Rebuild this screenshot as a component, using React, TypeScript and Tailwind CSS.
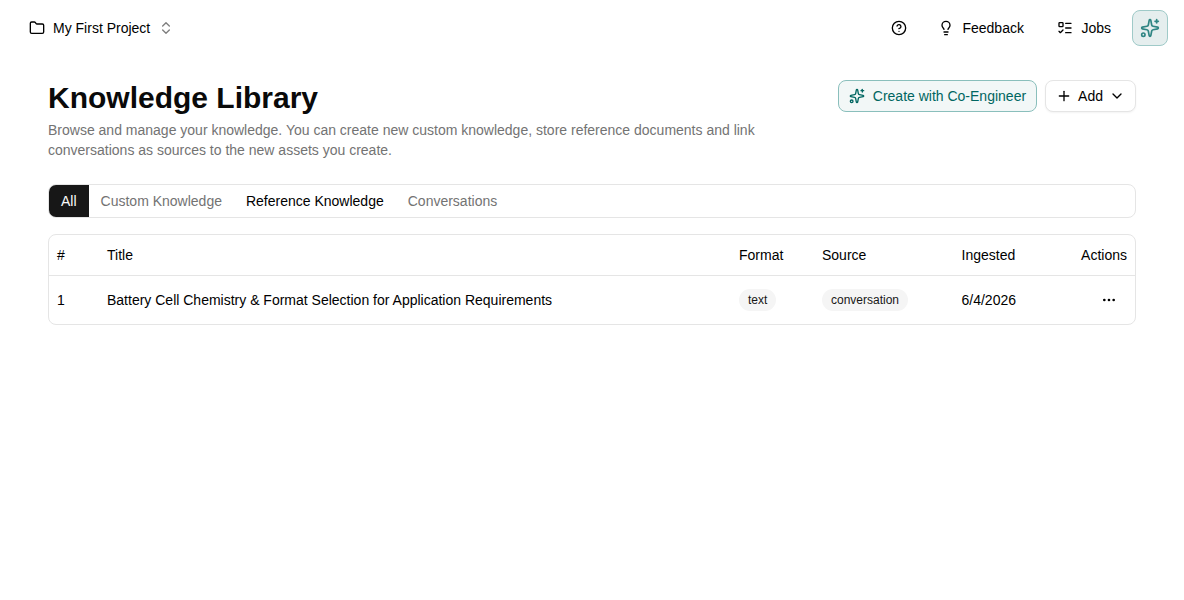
import {
  ChevronDown,
  ChevronsUpDown,
  CircleQuestionMark,
  Ellipsis,
  Folder,
  Lightbulb,
  ListTodo,
  Plus,
  Sparkles,
} from 'lucide-react';
import { clsx } from 'clsx';
import { useState } from 'react';

interface KnowledgeItem {
  id: number;
  title: string;
  format: string;
  source: string;
  ingested: string;
}

const TABS = ['All', 'Custom Knowledge', 'Reference Knowledge', 'Conversations'];

const ITEMS: KnowledgeItem[] = [
  {
    id: 1,
    title: 'Battery Cell Chemistry & Format Selection for Application Requirements',
    format: 'text',
    source: 'conversation',
    ingested: '6/4/2026',
  },
];

function Badge({ children }: { children: string }) {
  return (
    <span className="inline-flex h-[22px] items-center rounded-full bg-neutral-100 px-[9px] text-xs text-neutral-900">
      {children}
    </span>
  );
}

function TopBar() {
  return (
    <header className="flex h-14 items-center justify-between pr-4 pl-[29px]">
      <button className="flex items-center">
        <Folder className="mr-2 size-4" />
        My First Project
        <ChevronsUpDown className="ml-2 size-4 opacity-50" />
      </button>
      <div className="flex items-center">
        <button className="mr-[31px]">
          <CircleQuestionMark className="size-4" />
        </button>
        <button className="mr-[33.5px] flex items-center gap-2">
          <Lightbulb className="size-4" />
          Feedback
        </button>
        <button className="mr-[21px] flex items-center gap-2">
          <ListTodo className="size-4" />
          Jobs
        </button>
        <button className="flex size-9 items-center justify-center rounded-lg border border-[#9fcac8] bg-[#e5eeee] text-[#2f8583]">
          <Sparkles className="size-5" />
        </button>
      </div>
    </header>
  );
}

function Tabs() {
  const [active, setActive] = useState('All');

  return (
    <div className="mt-6 flex h-[34px] overflow-hidden rounded-lg border border-neutral-200">
      {TABS.map((tab) => (
        <button
          key={tab}
          onClick={() => setActive(tab)}
          className={clsx(
            'px-3',
            tab === active && 'bg-neutral-900 text-neutral-50',
            tab !== active && (tab === 'Reference Knowledge' ? 'text-black' : 'text-neutral-500'),
          )}
        >
          {tab}
        </button>
      ))}
    </div>
  );
}

function KnowledgeTable() {
  return (
    <div className="mt-4 overflow-hidden rounded-lg border border-neutral-200">
      <table className="w-full table-fixed border-separate border-spacing-0 text-left">
        <colgroup>
          <col className="w-[50px]" />
          <col />
          <col className="w-[83px]" />
          <col className="w-[139.5px]" />
          <col className="w-[119.5px]" />
          <col className="w-[62px]" />
        </colgroup>
        <thead>
          <tr className="[&>th]:h-[41px] [&>th]:border-b [&>th]:border-neutral-200 [&>th]:px-2 [&>th]:font-normal">
            <th>#</th>
            <th>Title</th>
            <th>Format</th>
            <th>Source</th>
            <th>Ingested</th>
            <th className="!px-0 !pr-2 text-right">Actions</th>
          </tr>
        </thead>
        <tbody>
          {ITEMS.map((item) => (
            <tr key={item.id} className="h-12 [&>td]:px-2">
              <td>{item.id}</td>
              <td>{item.title}</td>
              <td>
                <Badge>{item.format}</Badge>
              </td>
              <td>
                <Badge>{item.source}</Badge>
              </td>
              <td>{item.ingested}</td>
              <td>
                <button className="ml-auto flex h-8 w-9 items-center justify-center">
                  <Ellipsis className="size-4" />
                </button>
              </td>
            </tr>
          ))}
        </tbody>
      </table>
    </div>
  );
}

export default function App() {
  return (
    <div className="min-h-screen bg-white font-['Liberation_Sans',Arial,sans-serif] text-sm text-black">
      <TopBar />
      <main className="px-12 pt-6">
        <div className="flex items-start justify-between">
          <div className="w-[720px]">
            <h1 className="text-3xl font-bold text-neutral-950">Knowledge Library</h1>
            <p className="mt-1 text-neutral-500">
              Browse and manage your knowledge. You can create new custom knowledge, store reference documents and link
              conversations as sources to the new assets you create.
            </p>
          </div>
          <div className="flex gap-2">
            <button className="flex h-8 items-center gap-2 rounded-lg border border-[#8abfbc] bg-[#f2f7f7] px-2.5 text-[#006661]">
              <Sparkles className="size-4" />
              Create with Co-Engineer
            </button>
            <button className="flex h-8 items-center rounded-lg border border-neutral-200 bg-white px-2.5 shadow-xs">
              <Plus className="mr-1.5 size-4" />
              Add
              <ChevronDown className="ml-1.5 size-4" />
            </button>
          </div>
        </div>
        <Tabs />
        <KnowledgeTable />
      </main>
    </div>
  );
}
